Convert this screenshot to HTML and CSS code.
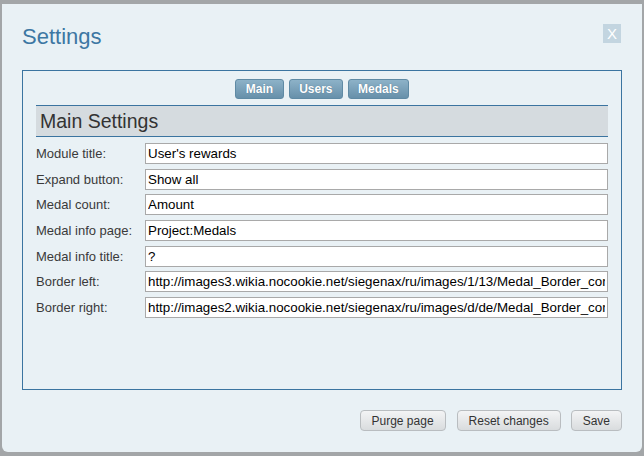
FILE: index.html
```html
<!DOCTYPE html>
<html lang="en">
<head>
  <meta charset="UTF-8">
  <title>Settings</title>
  <link rel="stylesheet" href="styles.css">
</head>
<body>
  <div class="dialog">
    <div class="dialog-head">
      <h1>Settings</h1>
      <span class="close">X</span>
    </div>

    <!-- main box -->
    <div class="box">
      <div class="tabs">
        <button class="tab">Main</button>
        <button class="tab">Users</button>
        <button class="tab">Medals</button>
      </div>
      <h2>Main Settings</h2>
      <div class="form">
        <label>Module title:</label>
        <input type="text" value="User's rewards">
        <label>Expand button:</label>
        <input type="text" value="Show all">
        <label>Medal count:</label>
        <input type="text" value="Amount">
        <label>Medal info page:</label>
        <input type="text" value="Project:Medals">
        <label>Medal info title:</label>
        <input type="text" value="?">
        <label>Border left:</label>
        <input type="text" value="http://images3.wikia.nocookie.net/siegenax/ru/images/1/13/Medal_Border_corner_left.png">
        <label>Border right:</label>
        <input type="text" value="http://images2.wikia.nocookie.net/siegenax/ru/images/d/de/Medal_Border_corner_right.png">
      </div>
    </div>

    <div class="actions">
      <button class="btn">Purge page</button>
      <button class="btn">Reset changes</button>
      <button class="btn">Save</button>
    </div>
  </div>
</body>
</html>
```

FILE: styles.css
```css
body {
  margin: 0;
  background: #a3a6a8;
  font-family: "Liberation Sans", Arial, sans-serif;
  overflow: hidden;
}
.dialog {
  margin: 4px 2px 0 2px;
  width: 640px;
  height: 448px;
  background: #e9f1f5;
  border-radius: 0 0 6px 6px;
  display: flex;
  flex-direction: column;
}
.dialog-head {
  display: flex;
  justify-content: space-between;
  align-items: flex-start;
  padding: 20px 21px 0 20px;
  height: 46px;
}
.dialog-head h1 {
  margin: 0;
  font-size: 22px;
  line-height: 26px;
  font-weight: normal;
  color: #3d77a3;
}
.close {
  width: 18px;
  height: 19px;
  background: #c3d5e0;
  color: #fff;
  font-size: 15px;
  line-height: 19px;
  text-align: center;
}
.box {
  margin: 0 20px;
  height: 318px;
  border: 1px solid #3b74a0;
  padding: 0 13px;
}
.tabs {
  display: flex;
  justify-content: center;
  gap: 5px;
  margin-top: 8px;
}
.tab {
  height: 20px;
  padding: 0 9px;
  border: 1px solid #5f8aa4;
  border-radius: 3px;
  background: linear-gradient(#8db2c8, #6790aa);
  color: #fff;
  font-family: inherit;
  font-size: 12px;
  font-weight: bold;
  text-shadow: 0 0 1px #4d7088;
}
.tab:first-child {
  padding: 0 10px;
}
.tab:last-child {
  padding: 0 9.5px;
}
.box h2 {
  margin: 6px 0 6px;
  height: 30px;
  border-top: 1px solid #3b74a0;
  border-bottom: 1px solid #3b74a0;
  background: #d5dbdf;
  padding-left: 4px;
  font-size: 19.5px;
  line-height: 30px;
  font-weight: normal;
  color: #333;
}
.form {
  display: grid;
  grid-template-columns: 109px 1fr;
  row-gap: 4.7px;
  align-items: center;
}
.form label {
  font-size: 13px;
  color: #3a3a3a;
}
.form input {
  height: 21px;
  box-sizing: border-box;
  border: 1px solid #a9a9a9;
  background: #fff;
  padding: 0 2px;
  font-family: inherit;
  font-size: 13.33px;
  color: #000;
}
.actions {
  display: flex;
  justify-content: flex-end;
  gap: 10px;
  padding: 20px 20px 0 0;
}
.btn {
  height: 21px;
  padding: 0 11px;
  border: 1px solid #b9bdc0;
  border-radius: 4px;
  background: linear-gradient(#f3f4f5, #d9dcde);
  color: #333;
  font-family: inherit;
  font-size: 12px;
}
.btn:first-child {
  margin-right: 1px;
}
```
